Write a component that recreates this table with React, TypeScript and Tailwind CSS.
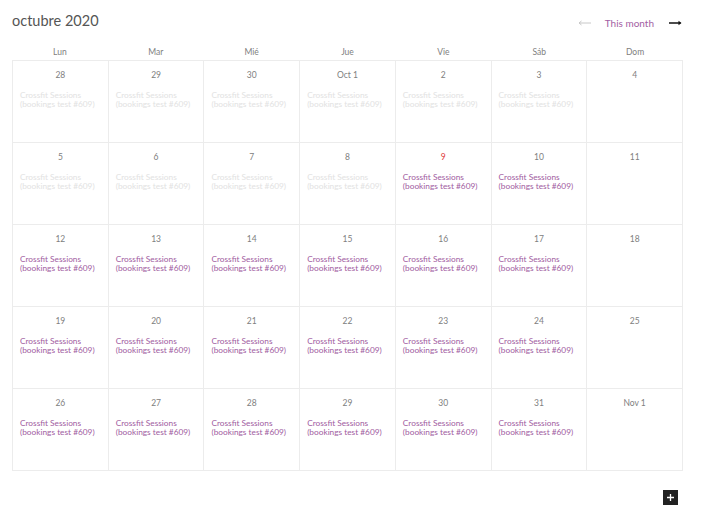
import React from "react";

type Cell = { label: string; event: "faded" | "active" | "none"; today?: boolean };

const rows: Cell[][] = [
  [
    { label: "28", event: "faded" },
    { label: "29", event: "faded" },
    { label: "30", event: "faded" },
    { label: "Oct 1", event: "faded" },
    { label: "2", event: "faded" },
    { label: "3", event: "faded" },
    { label: "4", event: "none" },
  ],
  [
    { label: "5", event: "faded" },
    { label: "6", event: "faded" },
    { label: "7", event: "faded" },
    { label: "8", event: "faded" },
    { label: "9", event: "active", today: true },
    { label: "10", event: "active" },
    { label: "11", event: "none" },
  ],
  [
    { label: "12", event: "active" },
    { label: "13", event: "active" },
    { label: "14", event: "active" },
    { label: "15", event: "active" },
    { label: "16", event: "active" },
    { label: "17", event: "active" },
    { label: "18", event: "none" },
  ],
  [
    { label: "19", event: "active" },
    { label: "20", event: "active" },
    { label: "21", event: "active" },
    { label: "22", event: "active" },
    { label: "23", event: "active" },
    { label: "24", event: "active" },
    { label: "25", event: "none" },
  ],
  [
    { label: "26", event: "active" },
    { label: "27", event: "active" },
    { label: "28", event: "active" },
    { label: "29", event: "active" },
    { label: "30", event: "active" },
    { label: "31", event: "active" },
    { label: "Nov 1", event: "none" },
  ],
];

const days = ["Lun", "Mar", "Mié", "Jue", "Vie", "Sáb", "Dom"];

export default function App() {
  return (
    <div
      className="w-[703px] h-[527px] bg-white relative"
      style={{ fontFamily: "Lato, 'Liberation Sans', sans-serif" }}
    >
      <div className="pl-[12px] pr-[20px]">
        <div className="flex items-center justify-between h-[40px] pt-[2px]">
          <div className="text-[14.5px] text-[#555] leading-none">octubre 2020</div>
          <div className="flex items-center gap-[14px] pt-[4px] pr-[1px]">
            <svg width="14" height="6" viewBox="0 0 14 6" className="ml-[3px]">
              <path d="M1 3 H13" stroke="#c8c8c8" strokeWidth="1" />
              <path d="M3.5 1 L1 3 L3.5 5" stroke="#c8c8c8" strokeWidth="1" fill="none" />
            </svg>
            <span className="text-[10px] text-[#a35ea3] -ml-[1px]">This month</span>
            <svg width="13" height="6" viewBox="0 0 13 6" className="ml-[1px]">
              <path d="M0 3 H11.5" stroke="#111" strokeWidth="1.5" />
              <path d="M9.5 0.8 L12.5 3 L9.5 5.2 Z" fill="#111" />
            </svg>
          </div>
        </div>
        <div className="grid grid-cols-7 h-[20px] items-center pt-[5px]">
          {days.map((d) => (
            <div key={d} className="text-center text-[8.5px] text-[#808080]">
              {d}
            </div>
          ))}
        </div>
        <div className="border-r border-b border-[#ececec] w-[671px]">
          {rows.map((row, i) => (
            <div key={i} className="grid grid-cols-7 h-[82px]">
              {row.map((c, j) => (
                <div key={j} className="border-l border-t border-[#ececec] px-[7px] pt-[9px]">
                  <div
                    className={`text-center text-[8.5px] leading-[10px] ${
                      c.today ? "text-[#e03c3c]" : "text-[#808080]"
                    }`}
                  >
                    {c.label}
                  </div>
                  {c.event !== "none" && (
                    <div
                      className={`mt-[11px] text-[8.3px] leading-[9px] ${
                        c.event === "faded" ? "text-[#e2e2e2]" : "text-[#a15d9f]"
                      }`}
                    >
                      Crossfit Sessions
                      <br />
                      (bookings test #609)
                    </div>
                  )}
                </div>
              ))}
            </div>
          ))}
        </div>
      </div>
      <div className="absolute left-[663px] top-[490px] w-[15px] h-[15px] bg-[#222] flex items-center justify-center">
        <svg width="9" height="9" viewBox="0 0 9 9">
          <path d="M4.5 1 V8 M1 4.5 H8" stroke="#fff" strokeWidth="1.3" />
        </svg>
      </div>
    </div>
  );
}
